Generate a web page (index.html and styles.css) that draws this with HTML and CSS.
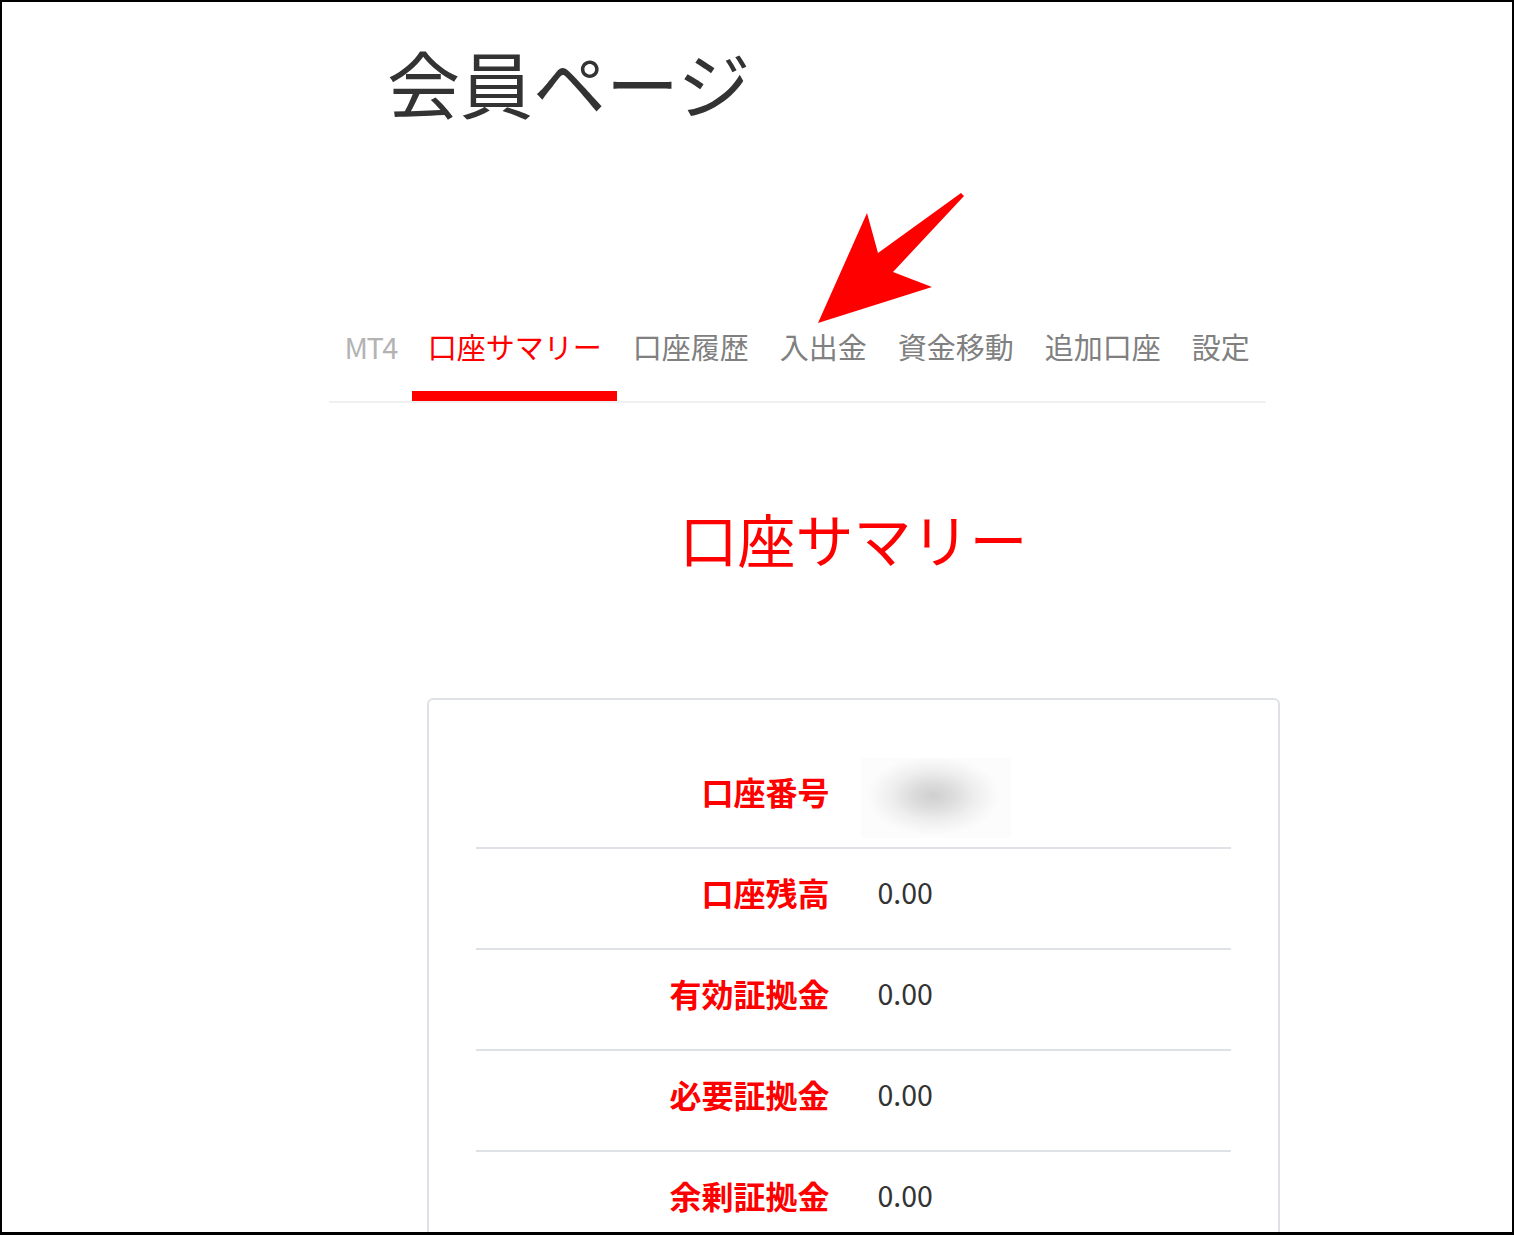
FILE: index.html
```html
<!DOCTYPE html>
<html lang="ja">
<head>
<meta charset="utf-8">
<title>会員ページ</title>
<link rel="stylesheet" href="styles.css">
</head>
<body>
<div class="frame">
  <h1 class="page-title">会員ページ</h1>

  <nav class="tabs">
    <a class="tab tab-muted">MT4</a>
    <a class="tab tab-active">口座サマリー</a>
    <a class="tab">口座履歴</a>
    <a class="tab">入出金</a>
    <a class="tab">資金移動</a>
    <a class="tab">追加口座</a>
    <a class="tab">設定</a>
  </nav>

  <section class="summary">
    <h2 class="summary-title">口座サマリー</h2>
    <div class="card">
      <div class="row">
        <div class="label">口座番号</div>
        <div class="value value-masked"><div class="blur-box"></div></div>
      </div>
      <div class="row">
        <div class="label">口座残高</div>
        <div class="value">0.00</div>
      </div>
      <div class="row">
        <div class="label">有効証拠金</div>
        <div class="value">0.00</div>
      </div>
      <div class="row">
        <div class="label">必要証拠金</div>
        <div class="value">0.00</div>
      </div>
      <div class="row">
        <div class="label">余剰証拠金</div>
        <div class="value">0.00</div>
      </div>
    </div>
  </section>

  <svg class="pointer" width="160" height="150" viewBox="810 185 160 150" xmlns="http://www.w3.org/2000/svg">
    <polygon points="818,323 867,213 878,253 961,193 964,196 893,272 932,287" fill="#ff0000"/>
  </svg>
</div>
</body>
</html>
```

FILE: styles.css
```css
html, body {
  margin: 0;
  padding: 0;
  background: #fff;
}

body {
  font-family: "Noto Sans CJK JP", "Noto Sans", sans-serif;
}

.frame {
  position: relative;
  box-sizing: border-box;
  width: 1514px;
  height: 1235px;
  border: 2px solid #000;
  border-bottom-width: 3px;
  overflow: hidden;
  background: #fff;
}

.page-title {
  margin: 42px 0 0 385px;
  font-size: 73px;
  line-height: 74px;
  font-weight: 400;
  color: #333;
}

.tabs {
  display: flex;
  margin: 202px 0 0 327px;
  width: 937px;
  border-bottom: 2px solid #f0f0f0;
}

.tab {
  display: block;
  padding: 12px 15.5px 31px;
  font-size: 29px;
  line-height: 28px;
  color: #808080;
  border-bottom: 10px solid transparent;
  white-space: nowrap;
}

.tab-muted {
  color: #b3b3b3;
  letter-spacing: -1.6px;
  padding-left: 15.5px;
}

.tab-active {
  color: #ff0000;
  border-bottom-color: #ff0000;
}

.summary {
  margin-left: 425px;
  width: 853px;
}

.summary-title {
  margin: 106px 0 131px;
  text-align: center;
  font-size: 58px;
  line-height: 58px;
  font-weight: 400;
  color: #ff0000;
}

.card {
  border: 2px solid #dee2e6;
  border-radius: 6px;
  padding: 48px 47px;
}

.row {
  display: grid;
  grid-template-columns: 1fr 1fr;
  align-items: center;
  height: 99px;
  border-bottom: 2px solid #dee2e6;
}

.label {
  text-align: right;
  padding: 0 24px 14px 0;
  font-size: 32px;
  line-height: 32px;
  font-weight: 700;
  color: #ff0000;
}

.value {
  padding: 0 0 14px 24px;
  font-size: 28.5px;
  line-height: 28px;
  color: #333;
}

.value-masked {
  padding-bottom: 0;
}

.blur-box {
  width: 150px;
  height: 80px;
  margin-left: -17px;
  background: radial-gradient(ellipse 45% 50% at 48% 47%, #cfcfcf 0%, #dcdcdc 30%, #eeeeee 62%, #f9f9f9 90%, #fcfcfc 100%);
}

.pointer {
  position: absolute;
  left: 808px;
  top: 183px;
}
```
